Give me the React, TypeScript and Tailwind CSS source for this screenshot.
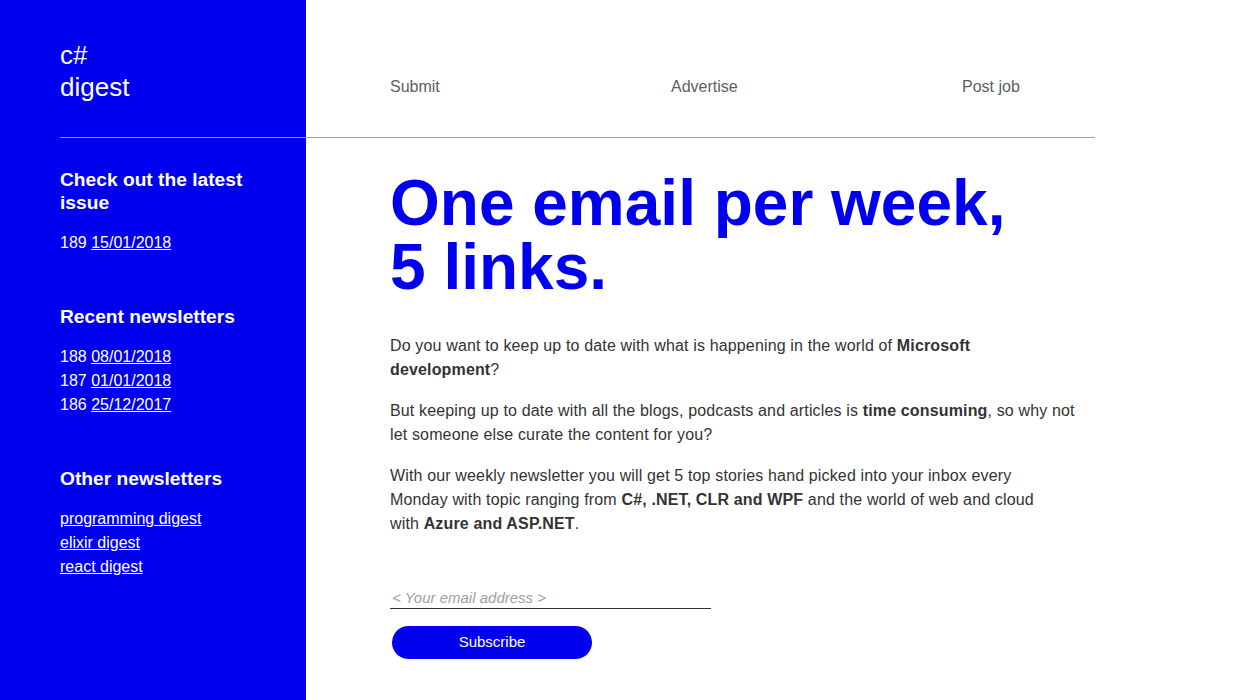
export default function App() {
  return (
    <div className="flex min-h-screen bg-white font-['Liberation_Sans',Arial,sans-serif]">
      {/* blue sidebar */}
      <aside className="w-[306px] shrink-0 bg-[#0000ee] pl-[60px] text-white">
        <div className="h-[138px] border-b border-[#a0a0a0] pt-[39px] text-[26px] leading-[32px]">
          c#
          <br />
          digest
        </div>

        <div className="pr-[60px] pt-[30px]">
          <h3 className="text-[19.2px] font-bold leading-[23px]">Check out the latest issue</h3>
          <p className="mt-[17px] text-base leading-6">
            189 <a href="#" className="underline">15/01/2018</a>
          </p>

          <h3 className="mt-[50px] text-[19.2px] font-bold leading-[23px]">Recent newsletters</h3>
          <ul className="mt-[17px] text-base leading-6">
            <li>
              188 <a href="#" className="underline">08/01/2018</a>
            </li>
            <li>
              187 <a href="#" className="underline">01/01/2018</a>
            </li>
            <li>
              186 <a href="#" className="underline">25/12/2017</a>
            </li>
          </ul>

          <h3 className="mt-[50px] text-[19.2px] font-bold leading-[23px]">Other newsletters</h3>
          <ul className="mt-[17px] text-base leading-6">
            <li>
              <a href="#" className="underline">programming digest</a>
            </li>
            <li>
              <a href="#" className="underline">elixir digest</a>
            </li>
            <li>
              <a href="#" className="underline">react digest</a>
            </li>
          </ul>
        </div>
      </aside>

      {/* main column */}
      <main className="w-[789px]">
        <nav className="flex h-[138px] border-b border-[#a0a0a0] pl-[84px] pt-[75px] text-base leading-6 text-[#5e5e5e]">
          <a href="#" className="w-[281px]">Submit</a>
          <a href="#" className="w-[291px]">Advertise</a>
          <a href="#">Post job</a>
        </nav>

        <div className="pl-[84px] pt-[33px]">
          <h1 className="text-[64px] font-bold leading-[64px] text-[#0000ee]">
            One email per week,
            <br />
            5 links.
          </h1>

          <div className="mt-[35px] max-w-[700px] space-y-[17px] text-base leading-6 tracking-[0.15px] text-[#333]">
            <p>
              Do you want to keep up to date with what is happening in the world of <b>Microsoft</b>
              <br />
              <b>development</b>?
            </p>
            <p>
              But keeping up to date with all the blogs, podcasts and articles is <b>time consuming</b>, so why not
              <br />
              let someone else curate the content for you?
            </p>
            <p>
              With our weekly newsletter you will get 5 top stories hand picked into your inbox every
              <br />
              Monday with topic ranging from <b>C#, .NET, CLR and WPF</b> and the world of web and cloud
              <br />
              with <b>Azure and ASP.NET</b>.
            </p>
          </div>

          <form className="mt-[52px]" onSubmit={(e) => e.preventDefault()}>
            <input
              type="email"
              placeholder="< Your email address >"
              className="block h-[21px] w-[321px] border-b border-[#333] px-0.5 text-[15px] italic text-[#333] placeholder:text-[#a0a0a0] focus:outline-none"
            />
            <button
              type="submit"
              className="mt-[17px] ml-[2px] h-[33px] w-[200px] rounded-full bg-[#0000ee] text-[15px] text-white"
            >
              Subscribe
            </button>
          </form>
        </div>
      </main>
    </div>
  );
}
